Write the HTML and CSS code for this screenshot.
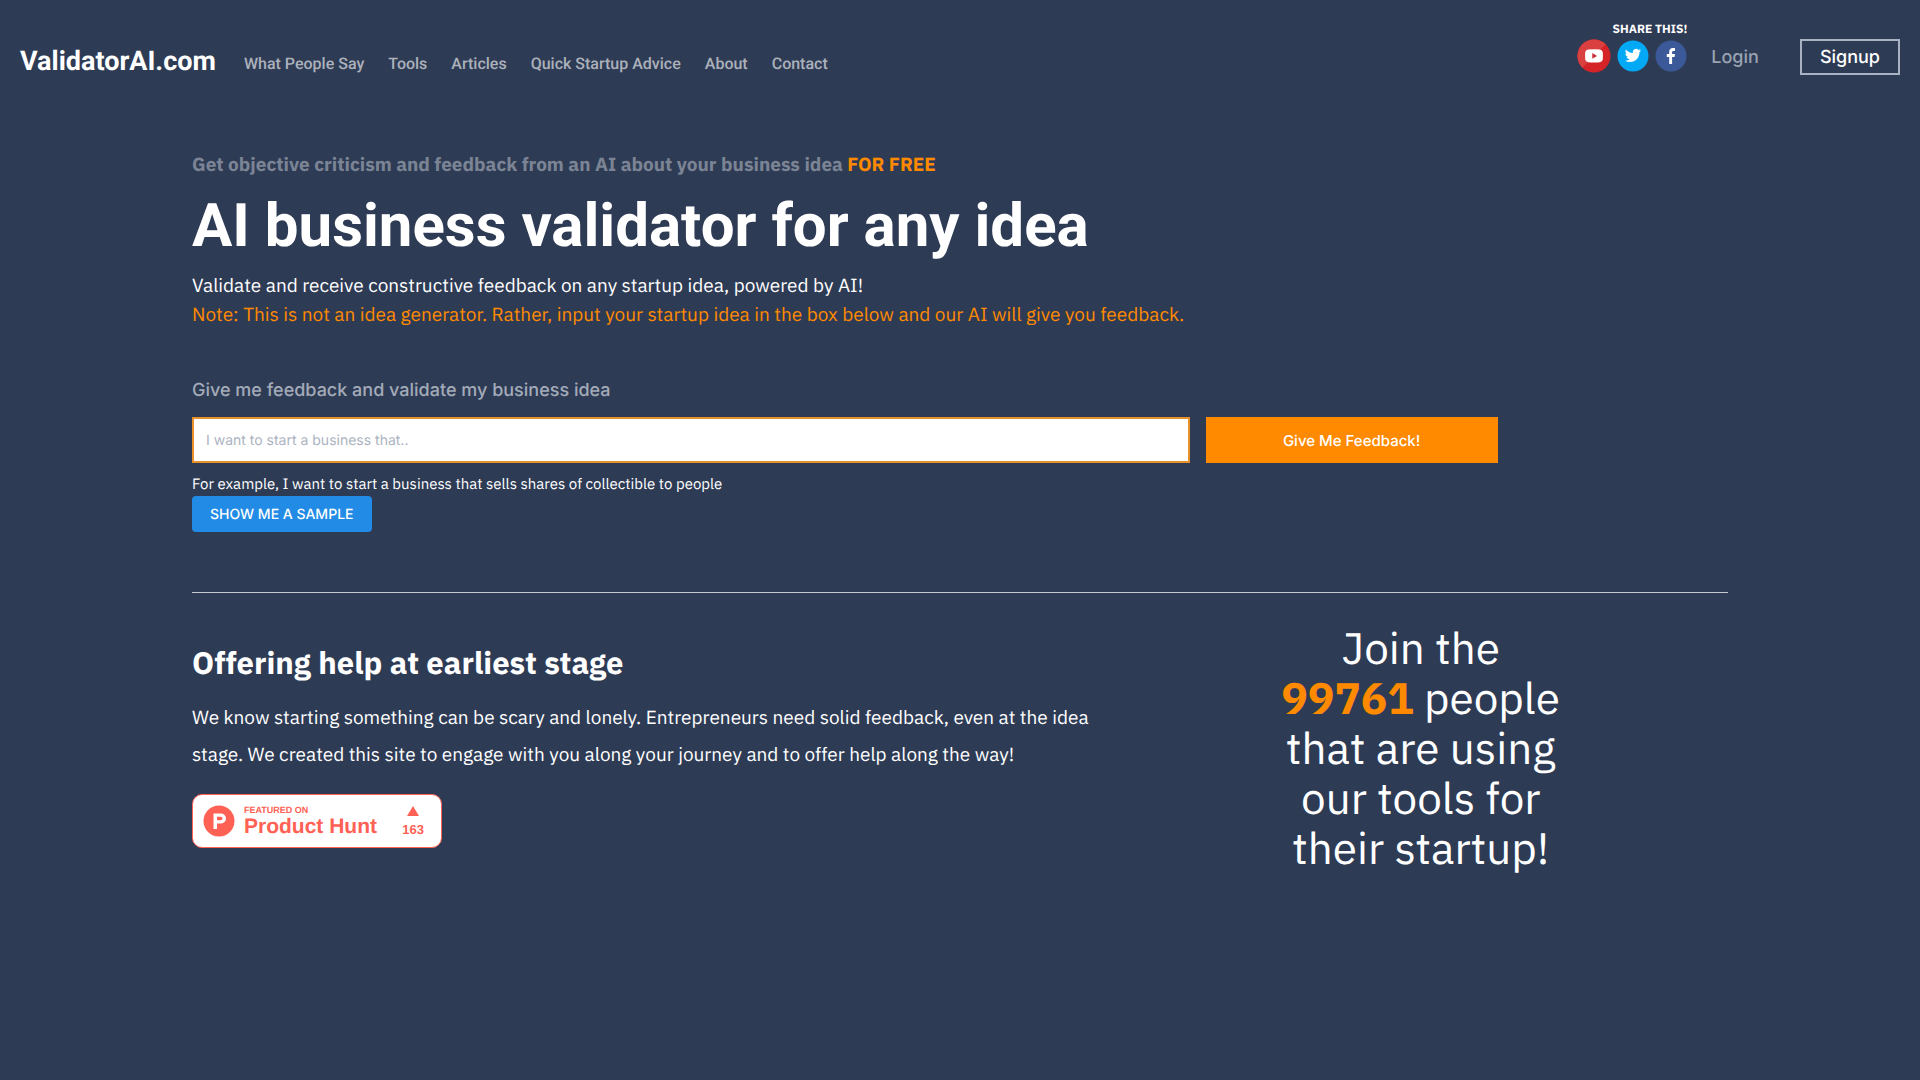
FILE: index.html
```html
<!DOCTYPE html>
<html lang="en">
<head>
    <meta charset="UTF-8">
    <meta name="viewport" content="width=device-width, initial-scale=1.0">
    <title>ValidatorAI.com</title>
    <link rel="stylesheet" href="styles.css">
</head>
<body>
    <header class="header">
        <a class="logo" href="#">ValidatorAI.com</a>
        <nav class="nav">
            <a href="#">What People Say</a>
            <a href="#">Tools</a>
            <a href="#">Articles</a>
            <a href="#">Quick Startup Advice</a>
            <a href="#">About</a>
            <a href="#">Contact</a>
        </nav>
        <div class="share">
            <strong class="share-title">SHARE THIS!</strong>
            <div class="share-icons">
                <a href="#" aria-label="YouTube">
                    <svg width="34" height="34" viewBox="0 0 34 34">
                        <circle cx="17" cy="17" r="16.5" fill="#d42428"/>
                        <path d="M5.3 28.7A16.5 16.5 0 0 1 28.7 5.3Z" fill="#d9403f"/>
                        <path d="M11 10.5Q17 9.900 23 10.500Q25.600 10.800 25.800 13.500Q26 17 25.800 20.300Q25.600 23 23 23.200Q17 23.800 11 23.200Q8.400 23 8.200 20.300Q8 17 8.200 13.500Q8.400 10.800 11 10.500Z" fill="#fff"/>
                        <path d="M15.300 14V19.800L20 16.900Z" fill="#c92a33"/>
                    </svg>
                </a>
                <a href="#" aria-label="Twitter">
                    <svg width="32" height="32" viewBox="0 0 32 32">
                        <circle cx="16" cy="16" r="15.500" fill="#03a9f4"/>
                        <g transform="translate(7.800 7.300) scale(.68)">
                            <path fill="#fff" d="M23.950 4.570a10 10 0 0 1-2.820.770 4.960 4.960 0 0 0 2.160-2.720c-.950.550-2 .950-3.130 1.180a4.920 4.920 0 0 0-8.380 4.480C7.690 8.100 4.070 6.130 1.640 3.160a4.820 4.820 0 0 0-.660 2.480c0 1.710.870 3.210 2.190 4.100a4.900 4.900 0 0 1-2.230-.620v.060a4.920 4.920 0 0 0 3.950 4.830 5 5 0 0 1-2.210.080 4.940 4.940 0 0 0 4.600 3.420A9.870 9.870 0 0 1 0 19.540a14 14 0 0 0 7.550 2.210c9.050 0 14-7.500 14-13.980 0-.210 0-.420-.020-.630a9.940 9.940 0 0 0 2.460-2.550z"/>
                        </g>
                    </svg>
                </a>
                <a href="#" aria-label="Facebook">
                    <svg width="32" height="32" viewBox="0 0 32 32">
                        <circle cx="16" cy="16" r="15.500" fill="#3b5998"/>
                        <path fill="#fff" d="M14.200 24V16.900H11.800V13.900H14.200V11.900C14.200 9.400 15.600 8.100 17.800 8.100C18.800 8.100 19.700 8.200 20 8.200V10.900H18.400C17.300 10.900 17.100 11.500 17.100 12.200V13.900H20L19.600 16.900H17.100V24Z"/>
                    </svg>
                </a>
            </div>
        </div>
        <a class="login" href="#">Login</a>
        <a class="signup" href="#">Signup</a>
    </header>

    <main class="container">
        <section class="hero">
            <p class="tagline">Get objective criticism and feedback from an AI about your business idea <span class="orange">FOR FREE</span></p>
            <h1>AI business validator for any idea</h1>
            <p class="intro">Validate and receive constructive feedback on any startup idea, powered by AI!</p>
            <p class="intro orange">Note: This is not an idea generator. Rather, input your startup idea in the box below and our AI will give you feedback.</p>
        </section>

        <form class="idea-form">
            <label for="idea">Give me feedback and validate my business idea</label>
            <div class="idea-row">
                <input type="text" id="idea" placeholder="I want to start a business that..">
                <button type="button" class="feedback-btn">Give Me Feedback!</button>
            </div>
            <p class="example">For example, I want to start a business that sells shares of collectible to people</p>
            <button type="button" class="sample-btn">SHOW ME A SAMPLE</button>
        </form>

        <section class="about">
            <div class="about-text">
                <h2>Offering help at earliest stage</h2>
                <p>We know starting something can be scary and lonely. Entrepreneurs need solid feedback, even at the idea stage. We created this site to engage with you along your journey and to offer help along the way!</p>
                <a class="badge" href="#">
                    <svg width="32" height="32" viewBox="0 0 32 32">
                        <circle cx="16" cy="16" r="15.500" fill="#ff6154"/>
                        <path fill="#fff" fill-rule="evenodd" d="M10.500 8.500H18A5 5 0 0 1 18 18.500H14V24H10.500ZM14 11.700V15.300H17.800A1.800 1.800 0 0 0 17.800 11.700Z"/>
                    </svg>
                    <span class="badge-name">
                        <small>FEATURED ON</small>
                        <b>Product Hunt</b>
                    </span>
                    <span class="badge-votes">
                        <svg width="12" height="10" viewBox="0 0 12 10"><path d="M6 0L12 10H0Z" fill="#ff6154"/></svg>
                        <b>163</b>
                    </span>
                </a>
            </div>
            <div class="about-join">
                <p>Join the <b class="orange">99761</b> people that are using our tools for their startup!</p>
            </div>
        </section>
    </main>
</body>
</html>
```
FILE: styles.css
```css
* {
    box-sizing: border-box;
}
body {
    margin: 0;
    background-color: #2e3b55;
    color: #fff;
    font-family: "IBM Plex Sans", "Open Sans", sans-serif;
    text-rendering: geometricPrecision;
}
a {
    color: inherit;
    text-decoration: none;
}
h1, h2, p {
    margin: 0;
}
svg {
    display: block;
}
input, button {
    text-rendering: inherit;
}
.orange {
    color: #ff8a00;
}

/* Header */
.header {
    display: flex;
    align-items: center;
    padding: 21px 20px 0;
}
.logo {
    font: bold 27px/40px Roboto, sans-serif;
    margin-top: 8px;
}
.nav {
    display: flex;
    gap: 24px;
    margin: 14px auto 0 28px;
    font: 500 16px/24px Roboto, sans-serif;
    color: #abb1bb;
}
.share {
    padding-bottom: 20px;
}
.share-title {
    display: block;
    font-size: 12px;
    line-height: 18px;
    text-align: right;
}
.share-icons {
    display: flex;
    align-items: center;
    gap: 6px;
}
.login {
    margin-left: 24px;
    padding-top: 2px;
    font: 500 18px/24px Inter, sans-serif;
    color: #9aa3b2;
}
.signup {
    margin-left: 41px;
    padding: 2px 18px 0;
    border: 2px solid #a9b2c3;
    font: 500 18px/30px Inter, sans-serif;
}

/* Hero */
.container {
    width: 80%;
    margin: 0 auto;
}
.hero {
    padding-top: 59px;
}
.tagline {
    font-size: 19px;
    line-height: 26px;
    font-weight: bold;
    color: #7b8494;
}
h1 {
    margin: 12px 0 10px;
    font: bold 60px/72px Roboto, sans-serif;
}
.intro {
    font-size: 19px;
    line-height: 29px;
}

/* Idea form */
.idea-form {
    padding: 48px 0 60px;
    border-bottom: 1px solid #c5cad3;
}
.idea-form label {
    display: block;
    margin-bottom: 13px;
    font: 500 18px/26px Inter, sans-serif;
    color: #a3abb9;
}
.idea-row {
    display: flex;
    gap: 16px;
    width: 85%;
}
.idea-row input {
    flex: 1;
    height: 46px;
    padding: 0 12px;
    border: 2px solid #e8902a;
    background-color: #fff;
    font: 14px Inter, sans-serif;
}
.idea-row input::placeholder {
    color: #acb3c1;
}
.feedback-btn {
    width: 292px;
    border: 0;
    background-color: #ff8a00;
    color: #fff;
    font: 500 15px Inter, sans-serif;
}
.example {
    margin-top: 11px;
    font-size: 15px;
    line-height: 22px;
}
.sample-btn {
    display: block;
    height: 36px;
    padding: 0 18px;
    border: 0;
    border-radius: 4px;
    background-color: #228be6;
    color: #fff;
    font: 500 14px Inter, sans-serif;
}

/* Bottom section */
.about {
    display: flex;
    padding-top: 31px;
}
.about-text {
    width: 60%;
    padding: 18px 16px 0 0;
}
h2 {
    font-size: 31px;
    line-height: 42px;
}
.about-text p {
    margin: 16px 0 20px;
    font-size: 19px;
    line-height: 37px;
}
.about-join {
    width: 40%;
    font-size: 44px;
    line-height: 50px;
    text-align: center;
}
.about-join p {
    max-width: 290px;
    margin: 0 auto;
}

/* Product Hunt badge */
.badge {
    display: flex;
    align-items: center;
    width: 250px;
    height: 54px;
    padding: 0 17px 0 10px;
    border: 1px solid #ff6154;
    border-radius: 10px;
    background-color: #fff;
    color: #ff6154;
    font-family: "Liberation Sans", sans-serif;
}
.badge-name {
    display: flex;
    flex-direction: column;
    margin: 0 auto 0 9px;
}
.badge-name small {
    font-size: 9px;
    line-height: 12px;
    font-weight: bold;
}
.badge-name b {
    font-size: 21px;
    line-height: 22px;
}
.badge-votes {
    display: flex;
    flex-direction: column;
    align-items: center;
    gap: 4px;
    padding-top: 4px;
    font-size: 13px;
    line-height: 20px;
}
```
